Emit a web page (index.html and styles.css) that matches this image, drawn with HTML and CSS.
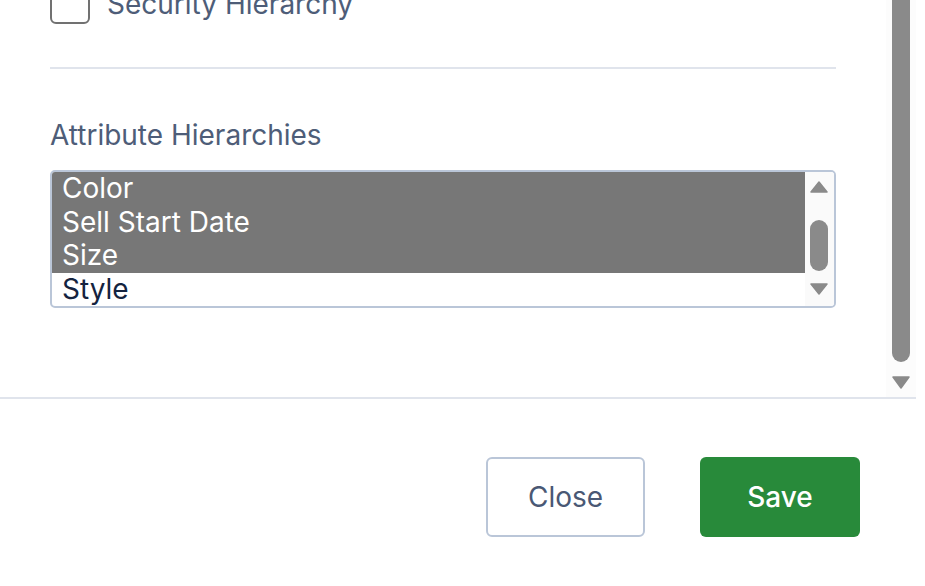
FILE: index.html
```html
<!DOCTYPE html>
<html lang="en">
<head>
<meta charset="utf-8">
<title>Hierarchies</title>
<link rel="stylesheet" href="styles.css">
</head>
<body>
<div class="dialog">
  <div class="scroll-area">
    <div class="content">
      <div class="content-inner">
        <label class="check-row">
          <span class="checkbox"></span>
          <span class="check-label">Security Hierarchy</span>
        </label>
        <div class="divider"></div>
        <div class="field-label">Attribute Hierarchies</div>
        <div class="listbox">
          <ul class="options">
            <li class="option selected">Color</li>
            <li class="option selected">Sell Start Date</li>
            <li class="option selected">Size</li>
            <li class="option">Style</li>
          </ul>
          <div class="list-scroll">
            <svg class="arrow arrow-up" width="18" height="12" viewBox="0 0 18 12"><path d="M9 1 L17 11 L1 11 Z" fill="#8a8a8a" stroke="#8a8a8a" stroke-width="1.5" stroke-linejoin="round"/></svg>
            <div class="list-thumb"></div>
            <svg class="arrow arrow-down" width="18" height="12" viewBox="0 0 18 12"><path d="M1 1 L17 1 L9 11 Z" fill="#8a8a8a" stroke="#8a8a8a" stroke-width="1.5" stroke-linejoin="round"/></svg>
          </div>
        </div>
      </div>
    </div>
    <div class="vscroll">
      <div class="vthumb"></div>
      <svg class="arrow vdown" width="18" height="13" viewBox="0 0 18 13"><path d="M1 1 L17 1 L9 12 Z" fill="#8a8a8a" stroke="#8a8a8a" stroke-width="1.5" stroke-linejoin="round"/></svg>
    </div>
  </div>
  <div class="footer">
    <button class="btn btn-close">Close</button>
    <button class="btn btn-save">Save</button>
  </div>
</div>
</body>
</html>
```
FILE: styles.css
```css
* { box-sizing: border-box; }
html, body { margin: 0; padding: 0; background: #ffffff; }
body {
  font-family: Inter, "Noto Sans", "Liberation Sans", sans-serif;
  width: 925px;
  height: 586px;
  overflow: hidden;
}
.dialog { width: 916px; }
.scroll-area {
  display: flex;
  height: 399px;
  border-bottom: 2px solid #e0e4ec;
}
.content {
  flex: 1;
  overflow: hidden;
  padding: 0 50px;
}
.content-inner { margin-top: -16px; }
.check-row {
  display: flex;
  align-items: center;
  gap: 17px;
}
.checkbox {
  width: 40px;
  height: 40px;
  border: 2px solid #717171;
  border-radius: 6px;
  flex: none;
}
.check-label {
  font-size: 28px;
  line-height: 34px;
  color: #4e5d78;
}
.divider {
  height: 2px;
  background: #e0e4ec;
  margin-top: 43px;
}
.field-label {
  margin-top: 49px;
  font-size: 28px;
  line-height: 34px;
  color: #4e5d78;
}
.listbox {
  margin-top: 18px;
  display: flex;
  border: 2px solid #bac6d8;
  border-radius: 5px;
  overflow: hidden;
}
.options {
  flex: 1;
  list-style: none;
  margin: 0;
  padding: 0;
}
.option {
  font-size: 28px;
  line-height: 33.5px;
  height: 33.5px;
  padding-left: 10px;
  color: #142340;
  white-space: nowrap;
}
.option.selected {
  background: #777777;
  color: #ffffff;
}
.list-scroll {
  width: 29px;
  background: #fafafa;
  display: flex;
  flex-direction: column;
  align-items: flex-start;
  padding: 9px 0 0 5px;
}
.list-scroll .arrow { display: block; }
.list-thumb {
  width: 18px;
  height: 51px;
  background: #8a8a8a;
  border-radius: 9px;
  margin-top: 27px;
}
.arrow-down { margin-top: 12px; }
.vscroll {
  width: 30px;
  flex: none;
  background: #fcfcfc;
  display: flex;
  flex-direction: column;
  padding-left: 6px;
}
.vthumb {
  width: 18px;
  height: 362px;
  background: #8a8a8a;
  border-radius: 0 0 9px 9px;
}
.vdown { display: block; margin-top: 14px; }
.footer {
  display: flex;
  justify-content: flex-end;
  gap: 55px;
  padding: 58px 56px 0 0;
}
.btn {
  font-family: Inter, "Noto Sans", "Liberation Sans", sans-serif;
  font-size: 28px;
  height: 80px;
  border-radius: 6px;
  cursor: pointer;
}
.btn-close {
  width: 159px;
  background: #ffffff;
  border: 2px solid #bac6d8;
  color: #4a5874;
  font-weight: 400;
}
.btn-save {
  width: 160px;
  background: #288a3a;
  border: none;
  color: #ffffff;
  font-weight: 500;
}
```
